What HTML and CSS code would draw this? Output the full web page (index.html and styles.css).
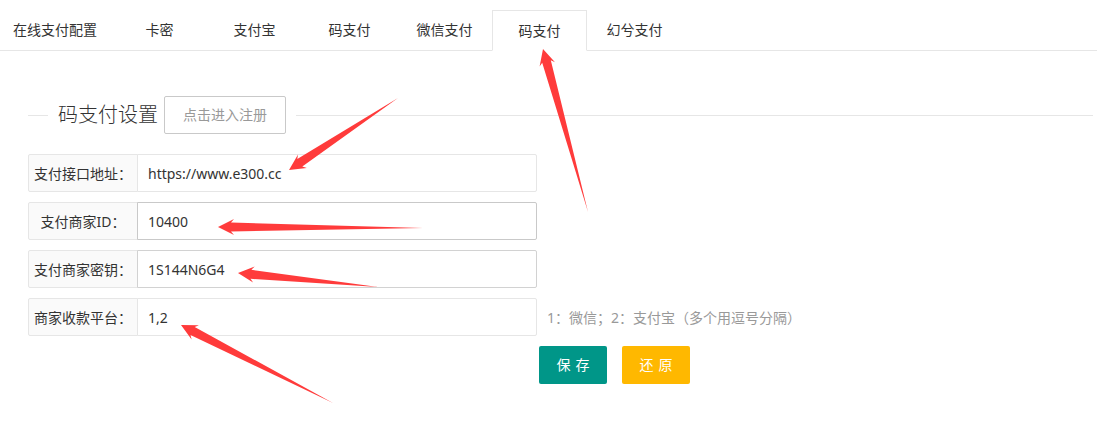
FILE: index.html
```html
<!DOCTYPE html>
<html lang="zh-CN">
<head>
<meta charset="utf-8">
<title>码支付设置</title>
<link rel="stylesheet" href="styles.css">
</head>
<body>
<div class="page">
  <ul class="tabs">
    <li class="tab">在线支付配置</li>
    <li class="tab">卡密</li>
    <li class="tab">支付宝</li>
    <li class="tab">码支付</li>
    <li class="tab">微信支付</li>
    <li class="tab active">码支付</li>
    <li class="tab">幻兮支付</li>
  </ul>
  <div class="content">
    <div class="legend">
      <span class="rule rule-short"></span>
      <span class="legend-title">码支付设置</span>
      <button class="btn-reg" type="button">点击进入注册</button>
      <span class="rule rule-long"></span>
    </div>
    <form class="form">
      <div class="form-item">
        <label class="label">支付接口地址：</label>
        <input class="input" type="text" value="https://www.e300.cc">
      </div>
      <div class="form-item">
        <label class="label">支付商家ID：</label>
        <input class="input input-hover" type="text" value="10400">
      </div>
      <div class="form-item">
        <label class="label">支付商家密钥：</label>
        <input class="input input-focus" type="text" value="1S144N6G4">
      </div>
      <div class="form-item">
        <label class="label">商家收款平台：</label>
        <input class="input" type="text" value="1,2">
        <span class="hint">1：微信；2：支付宝（多个用逗号分隔）</span>
      </div>
      <div class="actions">
        <button class="btn btn-save" type="button">保存</button>
        <button class="btn btn-reset" type="button">还原</button>
      </div>
    </form>
  </div>
  <svg class="arrows" width="1097" height="423" viewBox="0 0 1097 423" xmlns="http://www.w3.org/2000/svg">
    <polygon points="289,170 306.8,167.9 302.3,166.6 398,98 297.3,159.0 298.0,154.5"/>
    <polygon points="218,227 234,235 231,231.5 423,228 231,222.5 234,219"/>
    <polygon points="238,273 253.1,282.6 250.5,278.8 378,287 251.4,269.8 254.7,266.6"/>
    <polygon points="181,325 191.6,339.4 190.5,334.9 333,403 194.7,326.9 198.9,325.2"/>
    <polygon points="543,49 539.6,66.5 542.2,62.7 588,212 550.8,60.3 555.0,62.3"/>
  </svg>
</div>
</body>
</html>
```
FILE: styles.css
```css
html, body {
  margin: 0;
  padding: 0;
  background: #fff;
}

body {
  font-family: "Noto Sans", "Noto Sans CJK SC", sans-serif;
  font-size: 14px;
  color: #333;
}

.page {
  position: relative;
  width: 1097px;
  height: 423px;
  overflow: hidden;
  padding-top: 10px;
  box-sizing: border-box;
}

.tabs {
  display: flex;
  align-items: flex-start;
  list-style: none;
  margin: 0 0 0 -2px;
  padding: 0;
  height: 40px;
  border-bottom: 1px solid #e6e6e6;
}

.tab {
  min-width: 65px;
  padding: 0 15px;
  height: 40px;
  line-height: 40px;
  text-align: center;
  white-space: nowrap;
  color: #333;
}

.tab.active {
  box-sizing: border-box;
  width: 95px;
  height: 41px;
  border: 1px solid #e6e6e6;
  border-bottom-color: #fff;
  background: #fff;
  line-height: 39px;
  padding: 0;
}

.content {
  padding: 0 4px 0 28px;
}

.legend {
  display: flex;
  align-items: flex-start;
  height: 38px;
  margin-top: 45px;
}

.rule {
  height: 1px;
  margin-top: 19px;
  background: #e6e6e6;
}

.rule-short {
  width: 20px;
  flex: none;
}

.rule-long {
  flex: 1;
  margin-left: 10px;
}

.legend-title {
  margin-left: 10px;
  font-size: 20px;
  font-weight: 300;
  line-height: 38px;
  color: #333;
  white-space: nowrap;
}

.btn-reg {
  margin-left: 6px;
  box-sizing: border-box;
  height: 38px;
  padding: 0 18px;
  border: 1px solid #c9c9c9;
  border-radius: 2px;
  background: #fff;
  color: #999;
  font-family: inherit;
  font-size: 14px;
  line-height: 36px;
  white-space: nowrap;
}

.form {
  margin-top: 20px;
}

.form-item {
  display: flex;
  align-items: center;
  height: 38px;
  margin-bottom: 10px;
}

.label {
  box-sizing: border-box;
  flex: none;
  display: flex;
  align-items: center;
  justify-content: center;
  width: 110px;
  height: 38px;
  border: 1px solid #e6e6e6;
  border-radius: 2px 0 0 2px;
  background: #fafafa;
  color: #333;
  white-space: nowrap;
}

.input {
  box-sizing: border-box;
  flex: none;
  width: 400px;
  height: 38px;
  margin-left: -1px;
  padding: 0 10px;
  border: 1px solid #e6e6e6;
  border-radius: 0 2px 2px 0;
  background: #fff;
  color: #333;
  font-family: inherit;
  font-size: 14px;
  outline: none;
}

.input-hover {
  border-color: #c9c9c9;
}

.input-focus {
  border-color: #d2d2d2;
}

.hint {
  margin-left: 10px;
  color: #999;
  white-space: nowrap;
}

.actions {
  display: flex;
  gap: 15px;
  padding-left: 511px;
}

.btn {
  box-sizing: border-box;
  width: 68px;
  height: 38px;
  padding: 0;
  border: none;
  border-radius: 2px;
  color: #fff;
  font-family: inherit;
  font-size: 14px;
  line-height: 38px;
  letter-spacing: 5px;
  text-indent: 5px;
}

.btn-save {
  background: #009688;
}

.btn-reset {
  background: #ffb800;
}

.arrows {
  position: absolute;
  top: 0;
  left: 0;
  pointer-events: none;
}

.arrows polygon {
  fill: #ff3b3b;
}
```
